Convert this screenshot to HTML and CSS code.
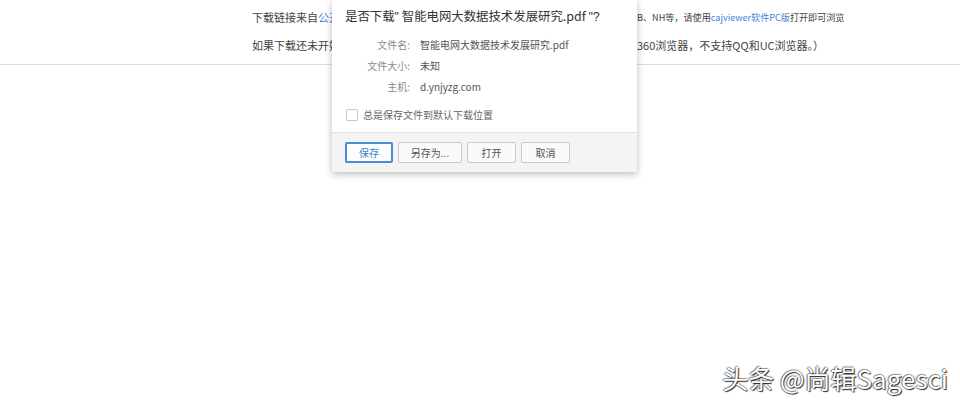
FILE: index.html
```html
<!DOCTYPE html>
<html lang="zh-CN">
<head>
<meta charset="utf-8">
<title>下载</title>
<link rel="stylesheet" href="styles.css">
</head>
<body>
<div class="page">
  <div class="notice">
    <div class="line line-1">
      <span class="part-a">下载链接来自<a class="link">公开</a></span>
      <span class="part-b small">B、NH等，请使用<a class="link">cajviewer软件PC版</a>打开即可浏览</span>
    </div>
    <div class="line line-2">
      <span class="part-a">如果下载还未开始</span>
      <span class="part-b">360浏览器，不支持QQ和UC浏览器。）</span>
    </div>
  </div>
</div>

<div class="dialog">
  <div class="dialog-body">
    <div class="title">是否下载<span class="q">"</span> 智能电网大数据技术发展研究.pdf <span class="q">"?</span></div>
    <div class="info">
      <div class="label">文件名:</div><div class="value">智能电网大数据技术发展研究.pdf</div>
      <div class="label">文件大小:</div><div class="value">未知</div>
      <div class="label">主机:</div><div class="value">d.ynjyzg.com</div>
    </div>
    <label class="check"><span class="box"></span>总是保存文件到默认下载位置</label>
  </div>
  <div class="dialog-footer">
    <button class="btn primary">保存</button>
    <button class="btn wide">另存为...</button>
    <button class="btn">打开</button>
    <button class="btn">取消</button>
  </div>
</div>

<div class="watermark">头条 @尚辑Sagesci</div>
</body>
</html>
```

FILE: styles.css
```css
html, body {
  margin: 0;
  padding: 0;
  background: #ffffff;
  width: 960px;
  height: 402px;
  overflow: hidden;
  font-family: "Noto Sans CJK SC", "Noto Sans", "Liberation Sans", sans-serif;
}

.page {
  width: 960px;
}

.notice {
  height: 65px;
  border-bottom: 1px solid #dcdcdc;
  padding-top: 7px;
  box-sizing: border-box;
}

.line {
  display: flex;
  align-items: center;
  padding-left: 252px;
  height: 20px;
  color: #444;
  font-size: 11px;
  white-space: nowrap;
}

.line-2 {
  margin-top: 8px;
}

.part-a {
  width: 385px;
  min-width: 385px;
  flex: none;
  overflow: hidden;
}

.part-b.small {
  font-size: 9.1px;
}

.link {
  color: #3d85d8;
}

.dialog {
  position: absolute;
  left: 332px;
  top: 0;
  width: 305px;
  background: #ffffff;
  box-shadow: 0 2px 7px rgba(0, 0, 0, 0.28);
  color: #333;
}

.dialog-body {
  padding: 6px 13px 9px 13px;
}

.title {
  font-size: 12.4px;
  line-height: 20px;
  color: #333;
  white-space: nowrap;
}

.q {
  font-family: "Liberation Sans", sans-serif;
}

.info {
  display: grid;
  grid-template-columns: 65px 1fr;
  column-gap: 10px;
  row-gap: 2px;
  margin-top: 8px;
  font-size: 10px;
  line-height: 19px;
}

.label {
  text-align: right;
  color: #8a8a8a;
}

.value {
  color: #555;
}

.check {
  display: flex;
  align-items: center;
  gap: 5px;
  margin-top: 11px;
  margin-left: 1px;
  font-size: 10px;
  color: #666;
  line-height: 16px;
}

.box {
  width: 10px;
  height: 10px;
  border: 1px solid #c8c8c8;
  border-radius: 1px;
  background: #fff;
}

.dialog-footer {
  display: flex;
  gap: 5px;
  padding: 9px 13px 9px 13px;
  background: #f4f4f4;
  border-top: 1px solid #e3e3e3;
}

.btn {
  width: 49px;
  height: 21px;
  padding: 0;
  font-family: inherit;
  font-size: 10px;
  color: #555;
  background: #fafafa;
  border: 1px solid #c9c9c9;
  border-radius: 2px;
}

.btn.wide {
  width: 64px;
}

.btn.primary {
  width: 48px;
  color: #3d7fc9;
  border: 2px solid #4a8ad6;
  background: #fbfdff;
}

.watermark {
  position: absolute;
  right: 12px;
  bottom: 9px;
  font-size: 26px;
  line-height: 30px;
  color: #ffffff;
  white-space: nowrap;
  text-shadow: 1px 1px 1px rgba(0, 0, 0, 0.85), -1px 0 1px rgba(0, 0, 0, 0.5), 0 -1px 1px rgba(0, 0, 0, 0.4);
}
```
